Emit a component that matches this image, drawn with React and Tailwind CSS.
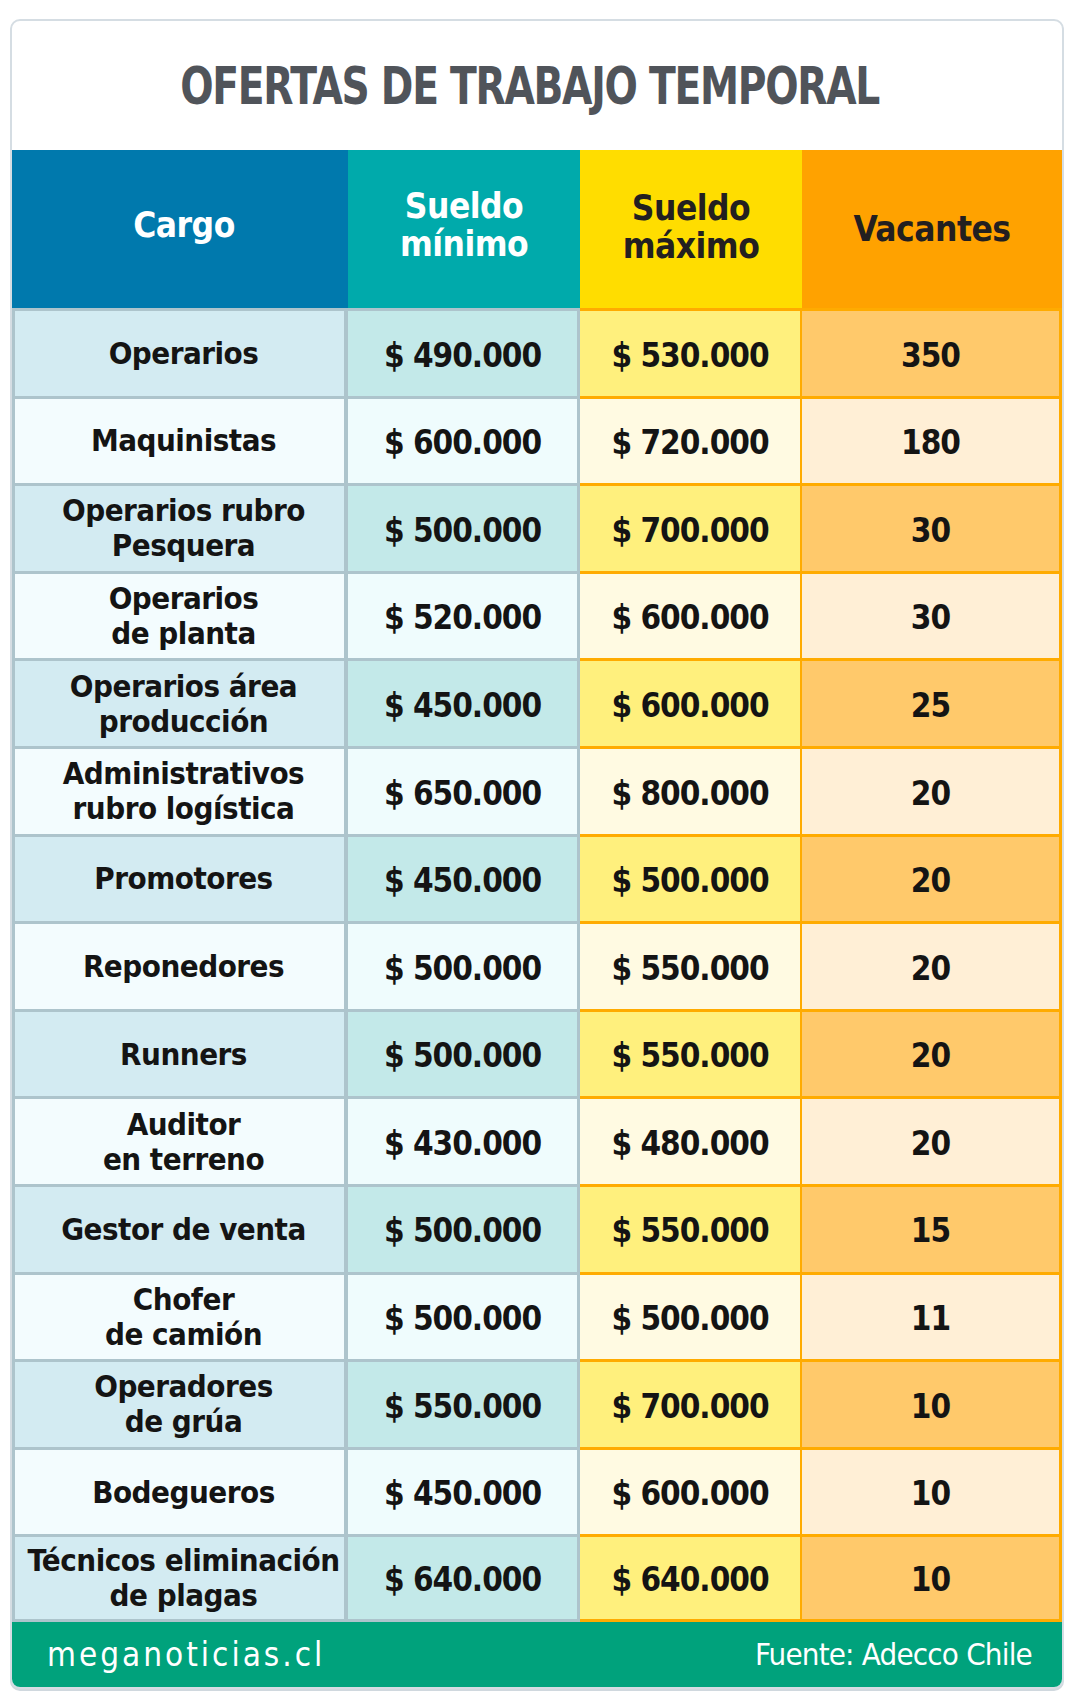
import React from "react";

const rows = [
  { cargo: ["Operarios"], min: "490.000", max: "530.000", vac: "350" },
  { cargo: ["Maquinistas"], min: "600.000", max: "720.000", vac: "180" },
  { cargo: ["Operarios rubro", "Pesquera"], min: "500.000", max: "700.000", vac: "30" },
  { cargo: ["Operarios", "de planta"], min: "520.000", max: "600.000", vac: "30" },
  { cargo: ["Operarios área", "producción"], min: "450.000", max: "600.000", vac: "25" },
  { cargo: ["Administrativos", "rubro logística"], min: "650.000", max: "800.000", vac: "20" },
  { cargo: ["Promotores"], min: "450.000", max: "500.000", vac: "20" },
  { cargo: ["Reponedores"], min: "500.000", max: "550.000", vac: "20" },
  { cargo: ["Runners"], min: "500.000", max: "550.000", vac: "20" },
  { cargo: ["Auditor", "en terreno"], min: "430.000", max: "480.000", vac: "20" },
  { cargo: ["Gestor de venta"], min: "500.000", max: "550.000", vac: "15" },
  { cargo: ["Chofer", "de camión"], min: "500.000", max: "500.000", vac: "11" },
  { cargo: ["Operadores", "de grúa"], min: "550.000", max: "700.000", vac: "10" },
  { cargo: ["Bodegueros"], min: "450.000", max: "600.000", vac: "10" },
  { cargo: ["Técnicos eliminación", "de plagas"], min: "640.000", max: "640.000", vac: "10" },
];

const Row = ({ row, dark, last }) => {
  const base = `h-[87.6px] flex items-center justify-center text-center border-t-[3px] ${last ? "border-b-[3px]" : ""}`;
  return (
    <div className="flex">
      <div
        className={`${base} w-[336px] pl-[8px] border-l-[3px] border-r-[4px] border-[#adc4cc] ${dark ? "bg-[#d3ebf2]" : "bg-[#f3fcfe]"}`}
      >
        <div className="text-[31px] leading-[35px] font-bold tracking-[-0.5px] text-[#141414] whitespace-nowrap">
          {row.cargo.map((line) => (
            <div key={line}>{line}</div>
          ))}
        </div>
      </div>
      <div
        className={`${base} w-[232px] border-r-[3px] border-[#adc4cc] ${dark ? "bg-[#c3e9e9]" : "bg-[#effcfd]"}`}
      >
        <span className="text-[33px] font-bold tracking-[-1px] text-[#141414] pt-1">$ {row.min}</span>
      </div>
      <div
        className={`${base} w-[222px] border-r-[2px] border-[#ffab00] ${dark ? "bg-[#fff07d]" : "bg-[#fffae2]"}`}
      >
        <span className="text-[33px] font-bold tracking-[-1px] text-[#141414] pt-1">$ {row.max}</span>
      </div>
      <div
        className={`${base} flex-1 border-r-[3px] border-[#ffab00] ${dark ? "bg-[#ffc96b]" : "bg-[#ffefd6]"}`}
      >
        <span className="text-[33px] font-bold tracking-[-1px] text-[#141414] pt-1">{row.vac}</span>
      </div>
    </div>
  );
};

const App = () => {
  return (
    <div className="min-h-[1705px] bg-white pt-[19px] pl-[10px] pr-[16px] font-['DejaVu_Sans_Condensed','Liberation_Sans_Narrow',sans-serif]">
      <div className="w-[1054px] rounded-[10px] border-2 border-[#d5dde3] bg-white overflow-hidden shadow-[0_2px_0_#d0d8de]">
        <div className="h-[129px] flex items-center justify-center pr-[14px]">
          <h1 className="inline-block scale-x-[0.855] text-[51px] font-bold text-[#50545a] tracking-[-1.5px] mt-[4px] whitespace-nowrap">
            OFERTAS DE TRABAJO TEMPORAL
          </h1>
        </div>

        <div className="flex h-[158px] text-[35px] font-bold leading-[38px] tracking-[-0.5px] text-center">
          <div className="w-[336px] bg-[#0079ad] text-white flex items-center justify-center pb-2 pl-[8px]">
            Cargo
          </div>
          <div className="w-[232px] bg-[#00aaab] text-white flex items-center justify-center pb-2">
            Sueldo
            <br />
            mínimo
          </div>
          <div className="w-[222px] bg-[#ffdd00] text-[#231f20] flex items-center justify-center pb-1">
            Sueldo
            <br />
            máximo
          </div>
          <div className="flex-1 bg-[#ffa200] text-[#231f20] flex items-center justify-center">
            Vacantes
          </div>
        </div>

        <div>
          {rows.map((row, i) => (
            <Row key={i} row={row} dark={i % 2 === 0} last={i === rows.length - 1} />
          ))}
        </div>

        <div className="h-[65px] bg-[#00a27c] flex items-center justify-between pl-[35px] pr-[30px] text-white">
          <span className="text-[33px] font-normal tracking-[3px]">meganoticias.cl</span>
          <span className="text-[31px] font-normal tracking-[-0.8px]">Fuente: Adecco Chile</span>
        </div>
      </div>
    </div>
  );
};

export default App;
